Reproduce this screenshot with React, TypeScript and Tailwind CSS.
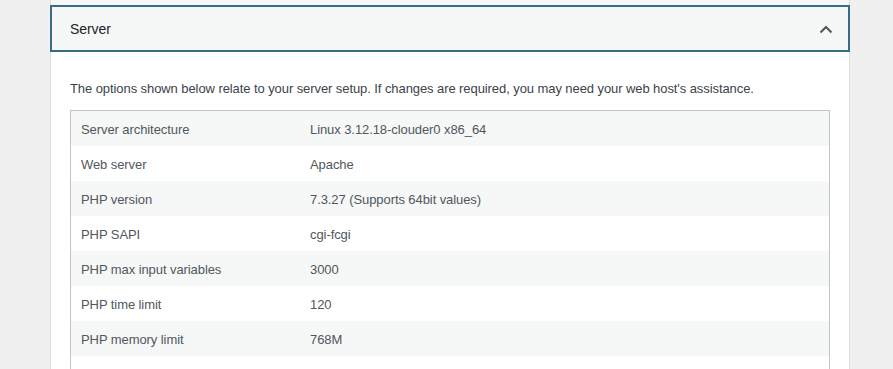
import React from "react";

interface InfoRow {
  label: string;
  value: string;
}

const rows: InfoRow[] = [
  { label: "Server architecture", value: "Linux 3.12.18-clouder0 x86_64" },
  { label: "Web server", value: "Apache" },
  { label: "PHP version", value: "7.3.27 (Supports 64bit values)" },
  { label: "PHP SAPI", value: "cgi-fcgi" },
  { label: "PHP max input variables", value: "3000" },
  { label: "PHP time limit", value: "120" },
  { label: "PHP memory limit", value: "768M" },
];

const App: React.FC = () => {
  return (
    <div
      className="h-[369px] overflow-hidden bg-[#f0f0f1] text-[13px] text-[#3c434a] tracking-[-0.08px]"
      style={{ fontFamily: '"Liberation Sans", Arial, sans-serif' }}
    >
      <div className="ml-[50px] w-[800px] h-full border-x border-[#dcdcde] bg-white">
        <div className="h-[5px] bg-[#f6f7f7]" />

        {/* Accordion header (focused) */}
        <button className="-mx-px flex h-[47px] w-[calc(100%+2px)] items-center justify-between border-2 border-[#3a6d85] bg-[#f6f7f7] pl-[18px] pr-[16px] pt-[2px] text-left">
          <span className="text-[14px] text-[#1d2327]">Server</span>
          <svg width="14" height="9" viewBox="0 0 14 9" fill="none" className="-mr-[1px]">
            <path d="M1.5 7.5L7 2l5.5 5.5" stroke="#50575e" strokeWidth="2" />
          </svg>
        </button>

        <div className="px-[19px] pt-[27px]">
          <p className="leading-[20px]">
            The options shown below relate to your server setup. If changes are required, you may need your web host's assistance.
          </p>

          <div className="mt-[11px] border border-[#c3c4c7]">
            {rows.map((row, i) => (
              <div
                key={row.label}
                className={`flex h-[35px] items-center pt-[2px] ${i % 2 === 0 ? "bg-[#f6f7f7]" : "bg-white"}`}
              >
                <div className="w-[229px] pl-[10px] text-[#50575e]">{row.label}</div>
                <div className="pl-[10px] text-[#50575e]">{row.value}</div>
              </div>
            ))}
            <div className="h-[35px] bg-white" />
          </div>
        </div>
      </div>
    </div>
  );
};

export default App;
